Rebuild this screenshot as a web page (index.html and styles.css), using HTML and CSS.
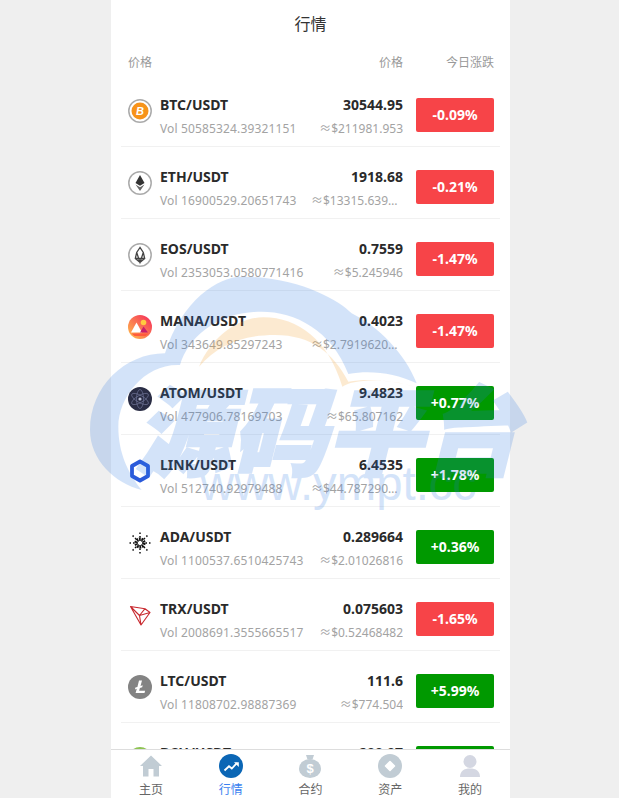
FILE: index.html
```html
<!DOCTYPE html>
<html lang="zh-CN">
  <head>
    <meta charset="UTF-8" />
    <meta name="viewport" content="width=device-width, initial-scale=1.0" />
    <title>行情</title>
    <link rel="stylesheet" href="styles.css">
  </head>
  <body>
    <div class="app">
      <header class="title">行情</header>
      <div class="list-head">
        <span class="head-name">价格</span>
        <span class="head-price">价格</span>
        <span class="head-change">今日涨跌</span>
      </div>

      <main class="list">
        <div class="row">
          <svg class="coin" viewBox="0 0 24 24">
            <circle cx="12" cy="12" r="11.200" fill="#fff" stroke="#aaa" stroke-width="1.500" />
            <circle cx="12" cy="12" r="8.500" fill="#f7931a" />
            <text x="12" y="16" class="coin-letter">B</text>
          </svg>
          <div class="info">
            <div class="pair">BTC/USDT</div>
            <div class="vol">Vol 50585324.39321151</div>
          </div>
          <div class="price">
            <div class="last">30544.95</div>
            <div class="cny">≈$211981.953</div>
          </div>
          <div class="change down">-0.09%</div>
        </div>

        <div class="row">
          <svg class="coin" viewBox="0 0 24 24">
            <circle cx="12" cy="12" r="11.200" fill="#fff" stroke="#aaa" stroke-width="1.500" />
            <path d="M12 4 7.500 12l4.500 2.800 4.500-2.800z" fill="#333" />
            <path d="M7.500 13.400l4.500 6.600 4.500-6.600-4.500 2.800z" fill="#666" />
          </svg>
          <div class="info">
            <div class="pair">ETH/USDT</div>
            <div class="vol">Vol 16900529.20651743</div>
          </div>
          <div class="price">
            <div class="last">1918.68</div>
            <div class="cny">≈$13315.639016</div>
          </div>
          <div class="change down">-0.21%</div>
        </div>

        <div class="row">
          <svg class="coin" viewBox="0 0 24 24">
            <circle cx="12" cy="12" r="11.200" fill="#fff" stroke="#aaa" stroke-width="1.500" />
            <path d="M12 4.500 8.700 9.500 7.300 15.500 12 19.500l4.700-4-1.400-6zM8.700 9.500 12 19.500l3.300-10M7.300 15.500h9.400" fill="none" stroke="#444" stroke-width="1.300" />
          </svg>
          <div class="info">
            <div class="pair">EOS/USDT</div>
            <div class="vol">Vol 2353053.0580771416</div>
          </div>
          <div class="price">
            <div class="last">0.7559</div>
            <div class="cny">≈$5.245946</div>
          </div>
          <div class="change down">-1.47%</div>
        </div>

        <div class="row">
          <svg class="coin" viewBox="0 0 24 24">
            <defs>
              <linearGradient id="mana" x1="0" y1="1" x2="1" y2="0">
                <stop offset="0" stop-color="#ffc24a" />
                <stop offset="1" stop-color="#f5265c" />
              </linearGradient>
            </defs>
            <circle cx="12" cy="12" r="12" fill="url(#mana)" />
            <circle cx="15.500" cy="7.500" r="2.800" fill="#ffc93f" />
            <path d="M8.500 7.500 14 17.500H3z" fill="#fff" />
            <path d="M15.500 11.500 20 17.500h-8z" fill="#c81e6b" />
            <path d="M3.500 18.500h17a12 12 0 0 1-3 2.500h-11z" fill="#ff5a3c" />
          </svg>
          <div class="info">
            <div class="pair">MANA/USDT</div>
            <div class="vol">Vol 343649.85297243</div>
          </div>
          <div class="price">
            <div class="last">0.4023</div>
            <div class="cny">≈$2.7919620412</div>
          </div>
          <div class="change down">-1.47%</div>
        </div>

        <div class="row">
          <svg class="coin" viewBox="0 0 24 24">
            <circle cx="12" cy="12" r="12" fill="#2a2d45" />
            <g fill="none" stroke="#6d7396" stroke-width=".7">
              <ellipse cx="12" cy="12" rx="3.500" ry="9.500" />
              <ellipse cx="12" cy="12" rx="3.500" ry="9.500" transform="rotate(60 12 12)" />
              <ellipse cx="12" cy="12" rx="3.500" ry="9.500" transform="rotate(120 12 12)" />
            </g>
            <circle cx="12" cy="12" r="1.600" fill="#b4b8d0" />
          </svg>
          <div class="info">
            <div class="pair">ATOM/USDT</div>
            <div class="vol">Vol 477906.78169703</div>
          </div>
          <div class="price">
            <div class="last">9.4823</div>
            <div class="cny">≈$65.807162</div>
          </div>
          <div class="change up">+0.77%</div>
        </div>

        <div class="row">
          <svg class="coin" viewBox="0 0 24 24">
            <path d="M12 2.500 20 7v10l-8 4.500L4 17V7z" fill="none" stroke="#2a5ada" stroke-width="3.800" stroke-linejoin="round" />
          </svg>
          <div class="info">
            <div class="pair">LINK/USDT</div>
            <div class="vol">Vol 512740.92979488</div>
          </div>
          <div class="price">
            <div class="last">6.4535</div>
            <div class="cny">≈$44.787290121</div>
          </div>
          <div class="change up">+1.78%</div>
        </div>

        <div class="row">
          <svg class="coin" viewBox="0 0 24 24">
            <circle cx="12" cy="12" r="4.200" fill="none" stroke="#111" stroke-width="2.800" stroke-dasharray="1.800 .8" />
            <g stroke="#111" stroke-width="1.500" stroke-dasharray="1.500 2" stroke-dashoffset="-9">
              <path d="M12 12V1M12 12V23M12 12H1M12 12H23M12 12 4.200 4.200M12 12 19.800 4.200M12 12 4.200 19.800M12 12 19.800 19.800" />
            </g>
          </svg>
          <div class="info">
            <div class="pair">ADA/USDT</div>
            <div class="vol">Vol 1100537.6510425743</div>
          </div>
          <div class="price">
            <div class="last">0.289664</div>
            <div class="cny">≈$2.01026816</div>
          </div>
          <div class="change up">+0.36%</div>
        </div>

        <div class="row">
          <svg class="coin" viewBox="0 0 24 24">
            <path d="M2.500 3.500 13 22l9-12.500-5-3.800zM2.500 3.500 11.500 12.500 13 22M11.500 12.500 22 9.500M11.500 12.500 17 5.700" fill="none" stroke="#c8282e" stroke-width="1.100" stroke-linejoin="round" />
          </svg>
          <div class="info">
            <div class="pair">TRX/USDT</div>
            <div class="vol">Vol 2008691.3555665517</div>
          </div>
          <div class="price">
            <div class="last">0.075603</div>
            <div class="cny">≈$0.52468482</div>
          </div>
          <div class="change down">-1.65%</div>
        </div>

        <div class="row">
          <svg class="coin" viewBox="0 0 24 24">
            <circle cx="12" cy="12" r="12" fill="#838383" />
            <path d="M11 5.500h3l-1.500 5.500 2.200-.8-.5 2-2.300.8-.8 2.700h6l-.6 2.300H7.600l1.200-4.200-1.900.7.500-1.900 2-.7z" fill="#fff" />
          </svg>
          <div class="info">
            <div class="pair">LTC/USDT</div>
            <div class="vol">Vol 11808702.98887369</div>
          </div>
          <div class="price">
            <div class="last">111.6</div>
            <div class="cny">≈$774.504</div>
          </div>
          <div class="change up">+5.99%</div>
        </div>

        <div class="row">
          <svg class="coin" viewBox="0 0 24 24">
            <circle cx="12" cy="12" r="12" fill="#8dc351" />
          </svg>
          <div class="info">
            <div class="pair">BCH/USDT</div>
            <div class="vol">Vol 90233.12004518</div>
          </div>
          <div class="price">
            <div class="last">200.07</div>
            <div class="cny">≈$1388.486</div>
          </div>
          <div class="change up">+2.10%</div>
        </div>
      </main>

      <nav class="tabbar">
        <a class="tab">
          <svg class="tab-icon" viewBox="0 0 24 24">
            <path d="M12 1.500 1 12h3v10.500h5.500V15h5v7.500H20V12h3z" fill="#c1ccd4" />
          </svg>
          <span>主页</span>
        </a>
        <a class="tab active">
          <svg class="tab-icon" viewBox="0 0 24 24">
            <circle cx="12" cy="12" r="12" fill="#0b66b5" />
            <path d="M5.500 16.500l4.500-4.200 2.800 2.200 5-5.300" fill="none" stroke="#fff" stroke-width="1.800" />
            <path d="M15 8.200h4.800V13z" fill="#fff" />
          </svg>
          <span>行情</span>
        </a>
        <a class="tab">
          <svg class="tab-icon" viewBox="0 0 24 24">
            <path d="M8 1h8l-1.500 4.500h-5z" fill="#c1ccd4" />
            <ellipse cx="12" cy="14.500" rx="11" ry="9.500" fill="#c1ccd4" />
            <text x="12" y="19" class="tab-dollar">$</text>
          </svg>
          <span>合约</span>
        </a>
        <a class="tab">
          <svg class="tab-icon" viewBox="0 0 24 24">
            <circle cx="12" cy="12" r="12" fill="#c1ccd4" />
            <path d="M12 7.500 16.500 12 12 16.500 7.500 12z" fill="#fff" stroke="#fff" stroke-linejoin="round" stroke-width="1.500" />
          </svg>
          <span>资产</span>
        </a>
        <a class="tab">
          <svg class="tab-icon" viewBox="0 0 24 24">
            <circle cx="12" cy="7.500" r="6.500" fill="#d4d7e2" />
            <path d="M2 23c0-6 4-8.500 10-8.500S22 17 22 23z" fill="#d4d7e2" />
          </svg>
          <span>我的</span>
        </a>
      </nav>
    </div>

    <!-- watermark sits over the whole page -->
    <svg class="watermark" viewBox="0 0 1350 750">
      <path d="M170 660C90 640 15 570 15 480 15 350 120 250 240 250 290 90 400 20 470 20 640 20 760 90 800 130 880 170 960 250 995 340 930 310 860 300 790 312 740 180 630 125 530 125 400 125 310 200 285 285 180 280 100 380 100 470 100 550 130 610 170 660z" fill="#2b78e4" />
      <path d="M342 290C380 200 460 142 535 142 640 142 730 210 772 350 800 328 900 322 990 350 920 330 850 325 790 335 745 250 680 195 570 195 470 195 400 225 342 290z" fill="#f59a1e" />
      <text x="150" y="595" class="mark-cn">源码平台</text>
      <text x="345" y="690" class="mark-url">www.ympt.cc</text>
    </svg>
  </body>
</html>
```

FILE: styles.css
```css
* {
  box-sizing: border-box;
  margin: 0;
  padding: 0;
}

html,
body {
  height: 100%;
  overflow: hidden;
}

body {
  background: #efefef;
  color: #222;
  font-family: "Noto Sans", "Noto Sans CJK SC", sans-serif;
}

.app {
  display: flex;
  flex-direction: column;
  width: 399px;
  height: 100%;
  margin-left: 111px;
  background: #fff;
}

.title {
  flex: none;
  height: 48px;
  font-size: 16px;
  line-height: 48px;
  text-align: center;
  color: #333;
}

.list-head {
  flex: none;
  display: flex;
  align-items: center;
  height: 27px;
  padding: 0 16px 0 17px;
  font-size: 12px;
  color: #999;
}

.head-name {
  flex: 1;
}

.head-price {
  margin-right: 43px;
}

.list {
  flex: 1;
  min-height: 0;
  overflow: hidden;
  padding: 0 10px;
}

.row {
  display: flex;
  align-items: center;
  height: 72px;
  padding: 8px 6px 0 7px;
  border-bottom: 1px solid #f1f1f1;
}

.coin {
  flex: none;
  width: 24px;
  height: 24px;
  margin-right: 8px;
  margin-bottom: 8px;
}

.coin-letter {
  font-family: "Liberation Sans", sans-serif;
  font-size: 11px;
  font-weight: 700;
  font-style: italic;
  text-anchor: middle;
  fill: #fff;
}

.info {
  flex: 1;
  min-width: 0;
  padding-top: 5px;
  white-space: nowrap;
}

.pair {
  font-size: 14px;
  font-weight: 700;
  line-height: 20px;
  margin-bottom: 4px;
  color: #2a2a2a;
}

.vol {
  font-size: 12px;
  line-height: 20px;
  letter-spacing: 0.14px;
  color: #a3a3a3;
}

.price {
  flex: none;
  width: 92px;
  margin-right: 13px;
  padding-top: 5px;
  text-align: right;
}

.last {
  font-size: 14px;
  font-weight: 700;
  line-height: 20px;
  margin-bottom: 4px;
  color: #2a2a2a;
}

.cny {
  overflow: hidden;
  font-size: 12px;
  line-height: 20px;
  color: #a3a3a3;
  white-space: nowrap;
  text-overflow: ellipsis;
}

.change {
  flex: none;
  width: 78px;
  height: 34px;
  border-radius: 2px;
  font-size: 14px;
  font-weight: 700;
  line-height: 34px;
  text-align: center;
  color: #fff;
}

.down {
  background: #f74448;
}

.up {
  background: #009900;
}

.tabbar {
  flex: none;
  display: flex;
  height: 49px;
  border-top: 1px solid #ddd;
  background: #fff;
}

.tab {
  flex: 1;
  display: flex;
  flex-direction: column;
  align-items: center;
  padding-top: 4px;
  font-size: 12px;
  line-height: 17px;
  color: #666;
}

.tab span {
  margin-top: 3px;
}

.tab.active {
  color: #3a7ff0;
}

.tab-icon {
  width: 24px;
  height: 24px;
}

.tab-dollar {
  font-family: "Liberation Sans", sans-serif;
  font-size: 13px;
  font-weight: 700;
  text-anchor: middle;
  fill: #fff;
}

.watermark {
  position: absolute;
  top: 270px;
  left: 85px;
  width: 450px;
  height: 250px;
  opacity: 0.2;
  pointer-events: none;
}

.mark-cn {
  font-family: "Noto Sans CJK SC", sans-serif;
  font-size: 288px;
  font-weight: 900;
  font-style: italic;
  fill: #2b78e4;
  stroke: #2b78e4;
  stroke-width: 8px;
}

.mark-url {
  font-family: "Liberation Sans", sans-serif;
  font-size: 142px;
  fill: #2b78e4;
}
```
